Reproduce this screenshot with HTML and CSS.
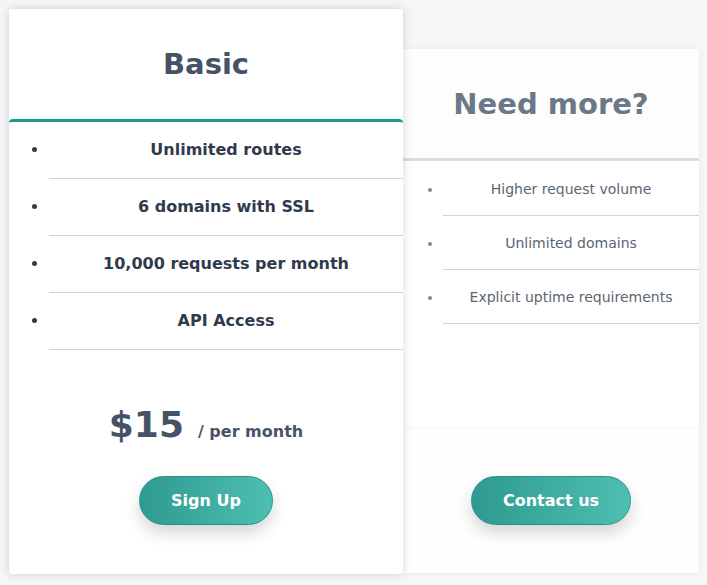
FILE: index.html
```html
<!DOCTYPE html>
<html lang="en">
<head>
    <meta charset="UTF-8">
    <meta name="viewport" content="width=device-width, initial-scale=1.0">
    <title>Pricing</title>
    <link rel="stylesheet" href="styles.css">
</head>
<body>

    <div class="plans">
        <div class="plan plan-main">
            <div class="plan-header">
                <h2>Basic</h2>
            </div>
            <ul class="features">
                <li>Unlimited routes</li>
                <li>6 domains with SSL</li>
                <li>10,000 requests per month</li>
                <li>API Access</li>
            </ul>
            <div class="plan-footer">
                <div class="price">
                    <span class="amount">$15</span>
                    <span class="period">/ per month</span>
                </div>
                <button class="btn">Sign Up</button>
            </div>
        </div>

        <div class="plan plan-side">
            <div class="plan-header">
                <h2>Need more?</h2>
            </div>
            <ul class="features">
                <li>Higher request volume</li>
                <li>Unlimited domains</li>
                <li>Explicit uptime requirements</li>
            </ul>
            <div class="plan-footer">
                <button class="btn">Contact us</button>
            </div>
        </div>
    </div>

</body>
</html>
```

FILE: styles.css
```css
body {
    font-family: "DejaVu Sans", Verdana, sans-serif;
    background-color: #f5f6f8;
    margin: 0;
    padding: 0;
}
.plans {
    display: flex;
    align-items: stretch;
    padding: 9px 8px 11px 9px;
}
.plan {
    display: flex;
    flex-direction: column;
    background-color: #fff;
}
.plan-main {
    width: 394px;
    border-radius: 3px;
    position: relative;
    z-index: 1;
    box-shadow: 0 0 10px rgba(0, 0, 0, 0.16);
}
.plan-side {
    width: 296px;
    margin-top: 40px;
    margin-bottom: 1px;
    border-radius: 0 3px 3px 0;
    box-shadow: 0 0 6px rgba(0, 0, 0, 0.06);
}
.plan-header {
    height: 110px;
    display: flex;
    align-items: center;
    justify-content: center;
}
.plan-header h2 {
    margin: 0;
    font-size: 29px;
    font-weight: bold;
}
.plan-main .plan-header h2 {
    color: #465366;
}
.plan-side .plan-header {
    height: 109px;
    background-color: #fdfdfd;
}
.plan-side .plan-header h2 {
    color: #6c7888;
}
.features {
    margin: 0;
    padding: 0 0 0 40px;
    list-style: disc;
}
.features li {
    text-align: center;
    border-bottom: 1px solid #cfd3d8;
}
.plan-main .features {
    border-top: 3px solid #1b9b8b;
    border-radius: 4px 4px 0 0;
}
.plan-main .features li {
    font-size: 16px;
    font-weight: bold;
    line-height: 20px;
    padding: 18px 0;
    color: #2f3b4c;
}
.plan-side .features {
    border-top: 3px solid #dcdcdc;
    padding-top: 1px;
    flex: 1;
}
.plan-side .features li {
    font-size: 14px;
    line-height: 18px;
    padding: 18px 0 17px;
    color: #5b6673;
}
.plan-side .features li::marker {
    color: #7d8792;
}
.plan-footer {
    display: flex;
    flex-direction: column;
    align-items: center;
    padding: 53px 0 49px;
}
.plan-side .plan-footer {
    padding: 48px 0 48px;
    border-top: 1px solid #f4f5f6;
    background-color: #fefefe;
}
.price {
    display: flex;
    align-items: baseline;
    gap: 14px;
    color: #465366;
    font-weight: bold;
    margin-bottom: 29px;
}
.amount {
    font-size: 36px;
    line-height: 44px;
}
.period {
    font-size: 16px;
}
.btn {
    font-family: inherit;
    font-size: 16px;
    font-weight: bold;
    line-height: 19px;
    color: #fff;
    padding: 14px 31px;
    border: 1px solid #279286;
    border-radius: 25px;
    background: linear-gradient(90deg, #2f9a8f, #4dbfb1);
    box-shadow: 0 8px 16px rgba(0, 0, 0, 0.16);
    cursor: pointer;
}
```
